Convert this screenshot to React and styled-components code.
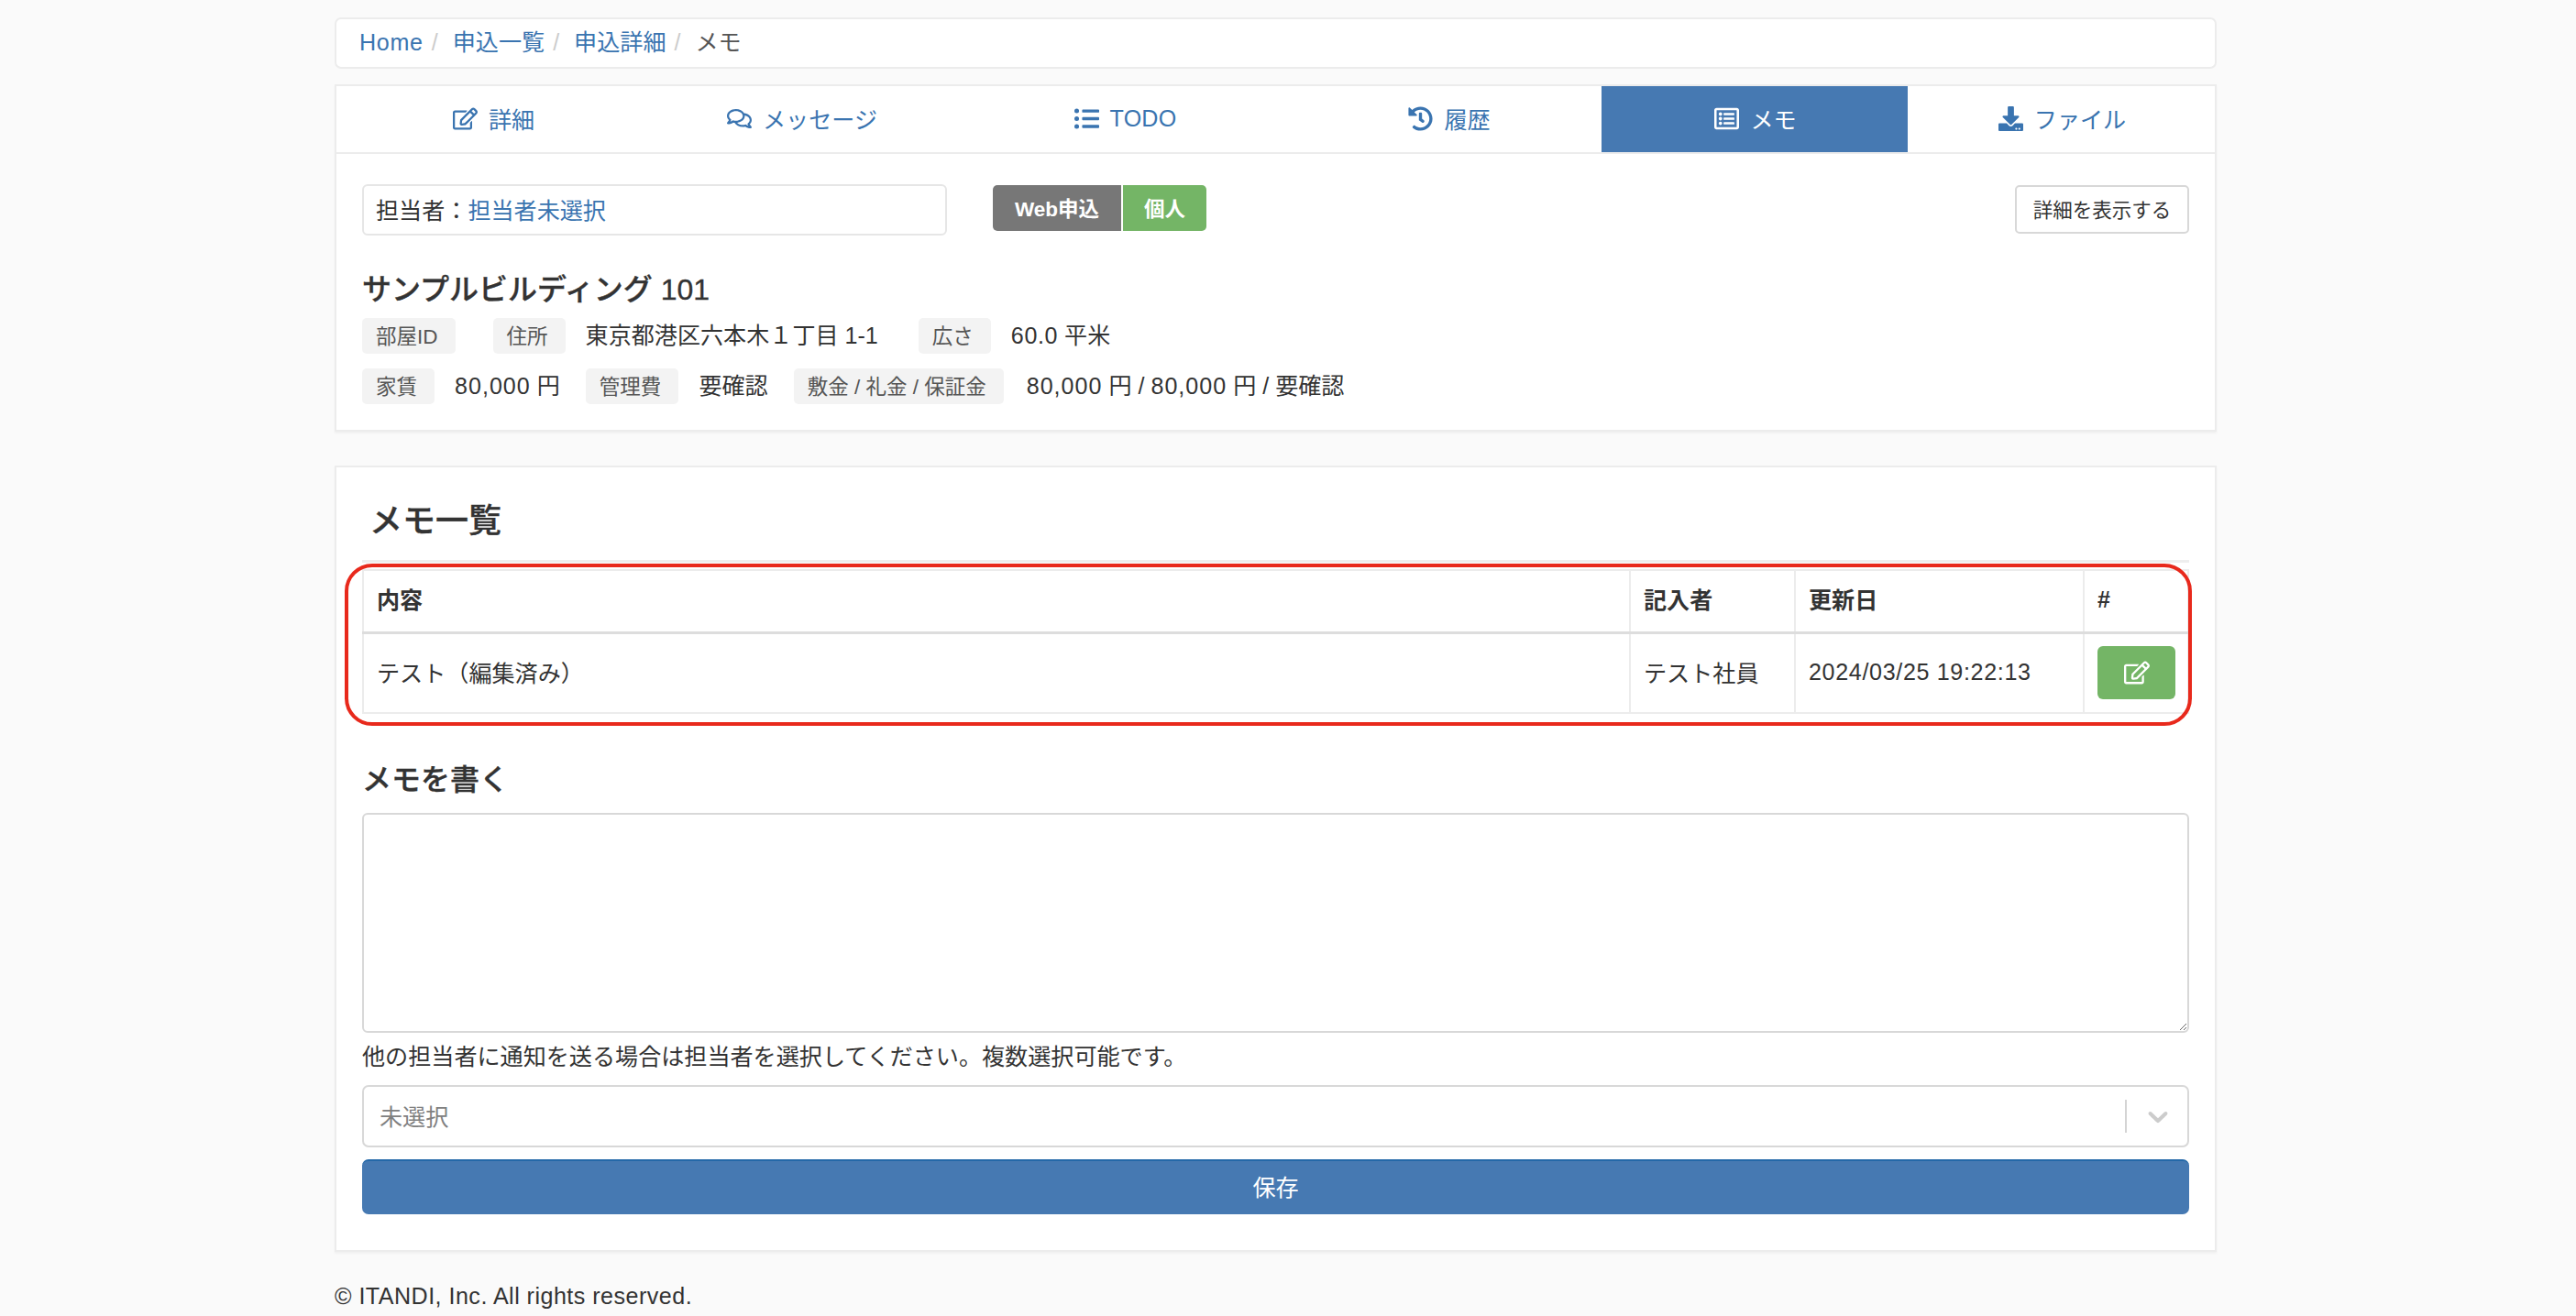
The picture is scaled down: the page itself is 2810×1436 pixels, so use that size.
import React from "react";
import styled, { createGlobalStyle } from "styled-components";
import { FaRegEdit, FaRegComments, FaListUl, FaHistory, FaRegListAlt, FaDownload } from "react-icons/fa";

const Global = createGlobalStyle`
  html, body { margin: 0; padding: 0; background: #fafafa; height: 1436px; overflow: hidden; }
  body { font-family: "Liberation Sans", "Noto Sans CJK JP", sans-serif; font-size: 25.1px; color: #333; }
  * { box-sizing: border-box; }
`;

const LINK = "#3a74b0";
const PRIMARY = "#4679b2";
const GREEN = "#74b566";
const LINE = "#ececec";

const Page = styled.div`
  width: 2053px;
  margin-left: 365px;
  padding-top: 19px;
`;

const Latin = styled.span`
  letter-spacing: ${(p) => p.$ls || 0.6}px;
`;

const Breadcrumb = styled.nav`
  height: 56px;
  padding: 0 25px;
  line-height: 50px;
  white-space: nowrap;
  background: #fff;
  border: 2px solid ${LINE};
  border-radius: 7px;
`;
const Crumb = styled.a`
  color: ${LINK};
  text-decoration: none;
`;
const Sep = styled.span`
  color: #ccc;
  margin: 0 16px 0 9px;
`;
const CurrentCrumb = styled.span`
  color: #555;
`;

const Card = styled.section`
  background: #fff;
  border: 2px solid ${LINE};
  box-shadow: 0 2px 2px rgba(0, 0, 0, 0.04);
`;
const TabsCard = styled(Card)`
  margin-top: 17px;
  height: 379px;
`;
const Tabs = styled.div`
  display: grid;
  grid-template-columns: 341px 332px 373px 334px 334px 335px;
  height: 74px;
  border-bottom: 2px solid ${LINE};
`;
const Tab = styled.a`
  display: flex;
  align-items: center;
  justify-content: center;
  gap: 12px;
  padding: 0 0 2px 2px;
  color: ${(p) => (p.$active ? "#fff" : LINK)};
  background: ${(p) => (p.$active ? PRIMARY : "transparent")};
  svg { font-size: 27px; }
`;

const Panel = styled.div`
  padding: 33px 28px 0;
`;
const TopRow = styled.div`
  display: flex;
  align-items: flex-start;
`;
const Assignee = styled.div`
  width: 638px;
  height: 56px;
  display: flex;
  align-items: center;
  padding: 0 13px 2px;
  border: 2px solid #e6e6e6;
  border-radius: 6px;
`;
const AssigneeLink = styled.a`
  color: ${LINK};
`;
const Badges = styled.div`
  display: flex;
  gap: 2px;
  margin: 1px 0 0 50px;
`;
const Badge = styled.span`
  height: 50px;
  display: flex;
  align-items: center;
  justify-content: center;
  padding-bottom: 2px;
  width: ${(p) => p.$w}px;
  background: ${(p) => p.$bg};
  color: #fff;
  font-size: 22.5px;
  font-weight: 700;
  border-radius: ${(p) => (p.$first ? "5px 0 0 5px" : "0 5px 5px 0")};
`;
const OutlineButton = styled.button`
  margin: 1px 0 0 auto;
  width: 190px;
  height: 53px;
  background: #fff;
  border: 2px solid #d8d8d8;
  border-radius: 5px;
  font: inherit;
  font-size: 21.5px;
  color: #333;
  padding: 0 0 2px;
`;
const PropertyTitle = styled.h3`
  margin: 39px 0 11px;
  font-size: 32px;
  line-height: 40px;
  font-weight: 500;
  color: #333;
  -webkit-text-stroke: 0.35px #333;
`;
const InfoRow = styled.div`
  display: flex;
  align-items: center;
  height: 39px;
  margin-bottom: 16px;
`;
const InfoLabel = styled.span`
  height: 39px;
  display: flex;
  align-items: center;
  padding: 0 19px 3px 15px;
  background: #f3f3f3;
  border-radius: 5px;
  font-size: 22.5px;
  color: #555;
  white-space: nowrap;
`;
const InfoValue = styled.span`
  margin: 0 ${(p) => p.$after}px 0 ${(p) => p.$before ?? 22}px;
  padding-bottom: 5px;
  white-space: nowrap;
`;

const MemoCard = styled(Card)`
  margin-top: 37px;
  height: 858px;
  padding: 0 28px;
`;
const SectionHeader = styled.div`
  height: 104px;
  padding: 37px 0 0 8px;
  border-bottom: 3px solid #eeeeee;
  margin-bottom: 7px;
`;
const SectionTitle = styled.h2`
  margin: 0;
  font-size: 36px;
  line-height: 44px;
  font-weight: 500;
  -webkit-text-stroke: 0.35px #333;
`;
const TableWrap = styled.div`
  position: relative;
`;
const Highlight = styled.div`
  position: absolute;
  top: -6px;
  bottom: -13px;
  left: -19px;
  right: -3px;
  border: 4px solid #e8291c;
  border-radius: 30px;
  pointer-events: none;
`;
const Table = styled.table`
  width: 100%;
  table-layout: fixed;
  border-collapse: collapse;
`;
const Th = styled.th`
  height: 68px;
  padding: 0 14px ${(p) => p.$pb ?? 6}px;
  text-align: left;
  font-weight: 700;
  border: 2px solid ${LINE};
  border-bottom: 3px solid #dddddd;
`;
const Td = styled.td`
  height: 88px;
  padding: 0 14px ${(p) => (p.$action ? 0 : 2)}px;
  border: 2px solid ${LINE};
`;
const EditButton = styled.button`
  width: 85px;
  height: 58px;
  display: flex;
  align-items: center;
  justify-content: center;
  background: ${GREEN};
  border: 0;
  border-radius: 6px;
  color: #fff;
  font-size: 28px;
  padding: 0;
`;
const WriteTitle = styled.h3`
  margin: 52px 0 16px;
  font-size: 32px;
  line-height: 40px;
  font-weight: 500;
  -webkit-text-stroke: 0.35px #333;
`;
const Memo = styled.textarea`
  display: block;
  width: 100%;
  height: 240px;
  border: 2px solid #d8d8d8;
  border-radius: 6px;
  background: #fff;
  resize: vertical;
  font: inherit;
`;
const Help = styled.p`
  margin: 12px 0 17px;
  line-height: 28px;
`;
const SelectBox = styled.div`
  height: 68px;
  display: flex;
  align-items: center;
  padding-left: 17px;
  border: 2px solid #d8d8d8;
  border-radius: 7px;
`;
const Placeholder = styled.span`
  flex: 1;
  padding-bottom: 3px;
  color: #808080;
`;
const SelectSep = styled.span`
  width: 2px;
  height: 36px;
  background: #d4d4d4;
`;
const Chevron = styled.svg`
  width: 36px;
  height: 36px;
  margin: 0 14px 0 16px;
  fill: #cccccc;
`;
const SaveButton = styled.button`
  display: block;
  width: 100%;
  height: 60px;
  margin-top: 13px;
  padding: 0 0 4px;
  background: ${PRIMARY};
  border: 0;
  border-top: 2px solid #2468a8;
  border-radius: 7px;
  color: #fff;
  font: inherit;
`;
const Footer = styled.footer`
  margin-top: 34px;
  line-height: 28px;
`;

const tabs = [
  [FaRegEdit, "詳細"],
  [FaRegComments, "メッセージ"],
  [FaListUl, <Latin key="t" $ls={0.2}>TODO</Latin>],
  [FaHistory, "履歴"],
  [FaRegListAlt, "メモ", true],
  [FaDownload, "ファイル"],
];

export default function App() {
  return (
    <Page>
      <Global />
      <Breadcrumb>
        <Crumb><Latin $ls={0.7}>Home</Latin></Crumb><Sep>/</Sep>
        <Crumb>申込一覧</Crumb><Sep>/</Sep>
        <Crumb>申込詳細</Crumb><Sep>/</Sep>
        <CurrentCrumb>メモ</CurrentCrumb>
      </Breadcrumb>

      <TabsCard>
        <Tabs>
          {tabs.map(([Icon, label, active], i) => (
            <Tab key={i} $active={active}>
              <Icon />
              {label}
            </Tab>
          ))}
        </Tabs>
        <Panel>
          <TopRow>
            <Assignee>担当者：<AssigneeLink>担当者未選択</AssigneeLink></Assignee>
            <Badges>
              <Badge $first $w={140} $bg="#777777">Web申込</Badge>
              <Badge $w={91} $bg={GREEN}>個人</Badge>
            </Badges>
            <OutlineButton>詳細を表示する</OutlineButton>
          </TopRow>
          <PropertyTitle>サンプルビルディング 101</PropertyTitle>
          <InfoRow>
            <InfoLabel>部屋ID</InfoLabel><InfoValue $after={19} />
            <InfoLabel>住所</InfoLabel><InfoValue $after={44}>東京都港区六本木１丁目 1-1</InfoValue>
            <InfoLabel>広さ</InfoLabel><InfoValue $after={44}><Latin>60.0</Latin> 平米</InfoValue>
          </InfoRow>
          <InfoRow>
            <InfoLabel>家賃</InfoLabel><InfoValue $after={28}><Latin $ls={1}>80,000</Latin> 円</InfoValue>
            <InfoLabel>管理費</InfoLabel><InfoValue $after={28}>要確認</InfoValue>
            <InfoLabel>敷金 / 礼金 / 保証金</InfoLabel><InfoValue $before={25} $after={0}><Latin $ls={1}>80,000</Latin> 円 / <Latin $ls={1}>80,000</Latin> 円 / 要確認</InfoValue>
          </InfoRow>
        </Panel>
      </TabsCard>

      <MemoCard>
        <SectionHeader><SectionTitle>メモ一覧</SectionTitle></SectionHeader>
        <TableWrap>
          <Table>
            <colgroup>
              <col />
              <col width="180" />
              <col width="315" />
              <col width="114" />
            </colgroup>
            <thead>
              <tr><Th>内容</Th><Th>記入者</Th><Th>更新日</Th><Th $pb={2}>#</Th></tr>
            </thead>
            <tbody>
              <tr>
                <Td>テスト（編集済み）</Td>
                <Td>テスト社員</Td>
                <Td><Latin $ls={0.65}>2024/03/25 19:22:13</Latin></Td>
                <Td $action><EditButton><FaRegEdit /></EditButton></Td>
              </tr>
            </tbody>
          </Table>
          <Highlight />
        </TableWrap>
        <WriteTitle>メモを書く</WriteTitle>
        <Memo />
        <Help>他の担当者に通知を送る場合は担当者を選択してください。複数選択可能です。</Help>
        <SelectBox>
          <Placeholder>未選択</Placeholder>
          <SelectSep />
          <Chevron viewBox="0 0 20 20">
            <path d="M4.516 7.548c0.436-0.446 1.043-0.481 1.576 0l3.908 3.747 3.908-3.747c0.533-0.481 1.141-0.446 1.574 0 0.436 0.445 0.408 1.197 0 1.615-0.406 0.418-4.695 4.502-4.695 4.502-0.217 0.223-0.502 0.335-0.787 0.335s-0.57-0.112-0.789-0.335c0 0-4.287-4.084-4.695-4.502s-0.436-1.17 0-1.615z" />
          </Chevron>
        </SelectBox>
        <SaveButton>保存</SaveButton>
      </MemoCard>
      <Footer><Latin $ls={0.47}>© ITANDI, Inc. All rights reserved.</Latin></Footer>
    </Page>
  );
}
